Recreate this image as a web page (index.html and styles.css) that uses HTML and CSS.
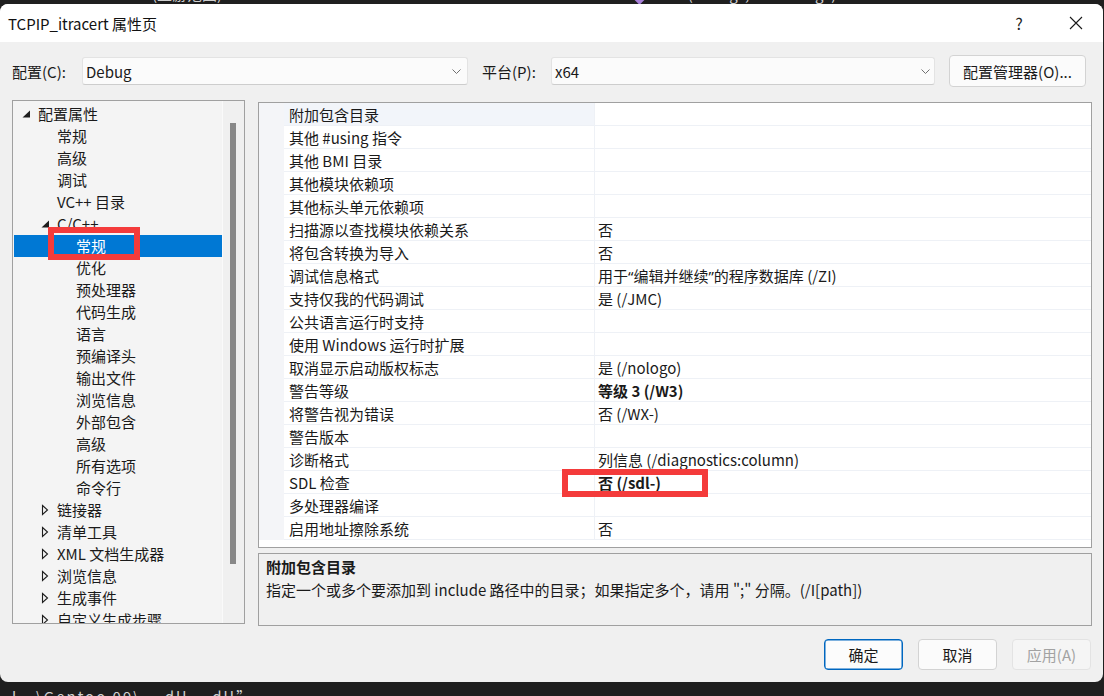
FILE: index.html
```html
<!DOCTYPE html>
<html lang="zh-CN">
<head>
<meta charset="utf-8">
<title>TCPIP_itracert 属性页</title>
<link rel="stylesheet" href="styles.css">
</head>
<body>
<div class="ide-top">
  <div class="ide-line">
    <span class="scope">(上游范围)</span>
    <span class="fn-icon"></span>
    <span class="fn">main(int argc, char** argv)</span>
  </div>
</div>
<div class="dialog">
  <div class="titlebar">
    <span class="title">TCPIP_itracert 属性页</span>
    <span class="help">?</span>
    <span class="close"><svg width="14" height="14" viewBox="0 0 14 14"><path d="M1 1L13 13M13 1L1 13" stroke="#1a1a1a" stroke-width="1.1" fill="none"/></svg></span>
  </div>
  <div class="content">
    <div class="config-row">
      <span class="lbl lbl-config">配置(C):</span>
      <div class="combo combo-config"><span class="combo-text">Debug</span><svg class="chev" width="9" height="5" viewBox="0 0 9 5"><path d="M0.5 0.5L4.5 4.5L8.5 0.5" stroke="#707070" stroke-width="1" fill="none"/></svg></div>
      <span class="lbl lbl-platform">平台(P):</span>
      <div class="combo combo-platform"><span class="combo-text">x64</span><svg class="chev" width="9" height="5" viewBox="0 0 9 5"><path d="M0.5 0.5L4.5 4.5L8.5 0.5" stroke="#707070" stroke-width="1" fill="none"/></svg></div>
      <button class="btn btn-manager">配置管理器(O)...</button>
    </div>
    <div class="main">
      <div class="tree">
        <div class="tree-list">
          <div class="node l0"><span class="tw"><svg width="19" height="22" viewBox="0 0 19 22"><path d="M11 7.5V14.5H3.5Z" fill="#1e1e1e"/></svg></span><span class="tx">配置属性</span></div>
          <div class="node l1"><span class="tw"></span><span class="tx">常规</span></div>
          <div class="node l1"><span class="tw"></span><span class="tx">高级</span></div>
          <div class="node l1"><span class="tw"></span><span class="tx">调试</span></div>
          <div class="node l1"><span class="tw"></span><span class="tx">VC++ 目录</span></div>
          <div class="node l1"><span class="tw"><svg width="19" height="22" viewBox="0 0 19 22"><path d="M11 7.5V14.5H3.5Z" fill="#1e1e1e"/></svg></span><span class="tx">C/C++</span></div>
          <div class="node l2 selected"><span class="tw"></span><span class="tx">常规</span></div>
          <div class="node l2"><span class="tw"></span><span class="tx">优化</span></div>
          <div class="node l2"><span class="tw"></span><span class="tx">预处理器</span></div>
          <div class="node l2"><span class="tw"></span><span class="tx">代码生成</span></div>
          <div class="node l2"><span class="tw"></span><span class="tx">语言</span></div>
          <div class="node l2"><span class="tw"></span><span class="tx">预编译头</span></div>
          <div class="node l2"><span class="tw"></span><span class="tx">输出文件</span></div>
          <div class="node l2"><span class="tw"></span><span class="tx">浏览信息</span></div>
          <div class="node l2"><span class="tw"></span><span class="tx">外部包含</span></div>
          <div class="node l2"><span class="tw"></span><span class="tx">高级</span></div>
          <div class="node l2"><span class="tw"></span><span class="tx">所有选项</span></div>
          <div class="node l2"><span class="tw"></span><span class="tx">命令行</span></div>
          <div class="node l1"><span class="tw"><svg width="19" height="22" viewBox="0 0 19 22"><path d="M4.5 6.5L9.5 11L4.5 15.5Z" fill="none" stroke="#1e1e1e" stroke-width="1.1"/></svg></span><span class="tx">链接器</span></div>
          <div class="node l1"><span class="tw"><svg width="19" height="22" viewBox="0 0 19 22"><path d="M4.5 6.5L9.5 11L4.5 15.5Z" fill="none" stroke="#1e1e1e" stroke-width="1.1"/></svg></span><span class="tx">清单工具</span></div>
          <div class="node l1"><span class="tw"><svg width="19" height="22" viewBox="0 0 19 22"><path d="M4.5 6.5L9.5 11L4.5 15.5Z" fill="none" stroke="#1e1e1e" stroke-width="1.1"/></svg></span><span class="tx">XML 文档生成器</span></div>
          <div class="node l1"><span class="tw"><svg width="19" height="22" viewBox="0 0 19 22"><path d="M4.5 6.5L9.5 11L4.5 15.5Z" fill="none" stroke="#1e1e1e" stroke-width="1.1"/></svg></span><span class="tx">浏览信息</span></div>
          <div class="node l1"><span class="tw"><svg width="19" height="22" viewBox="0 0 19 22"><path d="M4.5 6.5L9.5 11L4.5 15.5Z" fill="none" stroke="#1e1e1e" stroke-width="1.1"/></svg></span><span class="tx">生成事件</span></div>
          <div class="node l1"><span class="tw"><svg width="19" height="22" viewBox="0 0 19 22"><path d="M4.5 6.5L9.5 11L4.5 15.5Z" fill="none" stroke="#1e1e1e" stroke-width="1.1"/></svg></span><span class="tx">自定义生成步骤</span></div>
          <div class="mark mark-tree"></div>
        </div>
        <div class="tree-scroll"><div class="thumb"></div></div>
      </div>
      <div class="right">
        <div class="grid">
          <div class="gutter"></div>
          <div class="rows">
            <div class="row current"><div class="name">附加包含目录</div><div class="val"></div></div>
            <div class="row"><div class="name">其他 #using 指令</div><div class="val"></div></div>
            <div class="row"><div class="name">其他 BMI 目录</div><div class="val"></div></div>
            <div class="row"><div class="name">其他模块依赖项</div><div class="val"></div></div>
            <div class="row"><div class="name">其他标头单元依赖项</div><div class="val"></div></div>
            <div class="row"><div class="name">扫描源以查找模块依赖关系</div><div class="val">否</div></div>
            <div class="row"><div class="name">将包含转换为导入</div><div class="val">否</div></div>
            <div class="row"><div class="name">调试信息格式</div><div class="val">用于<span class="q">“</span>编辑并继续<span class="q">”</span>的程序数据库 (/ZI)</div></div>
            <div class="row"><div class="name">支持仅我的代码调试</div><div class="val">是 (/JMC)</div></div>
            <div class="row"><div class="name">公共语言运行时支持</div><div class="val"></div></div>
            <div class="row"><div class="name">使用 Windows 运行时扩展</div><div class="val"></div></div>
            <div class="row"><div class="name">取消显示启动版权标志</div><div class="val">是 (/nologo)</div></div>
            <div class="row"><div class="name">警告等级</div><div class="val bold">等级 3 (/W3)</div></div>
            <div class="row"><div class="name">将警告视为错误</div><div class="val">否 (/WX-)</div></div>
            <div class="row"><div class="name">警告版本</div><div class="val"></div></div>
            <div class="row"><div class="name">诊断格式</div><div class="val">列信息 (/diagnostics:column)</div></div>
            <div class="row"><div class="name">SDL 检查</div><div class="val bold">否 (/sdl-)</div></div>
            <div class="row"><div class="name">多处理器编译</div><div class="val"></div></div>
            <div class="row"><div class="name">启用地址擦除系统</div><div class="val">否</div></div>
          </div>
          <div class="mark mark-sdl"></div>
        </div>
        <div class="desc">
          <div class="desc-title">附加包含目录</div>
          <div class="desc-text">指定一个或多个要添加到 include 路径中的目录；如果指定多个，请用 ";" 分隔。(/I[path])</div>
        </div>
      </div>
    </div>
    <div class="actions">
      <button class="btn btn-ok">确定</button>
      <button class="btn btn-cancel">取消</button>
      <button class="btn btn-apply">应用(A)</button>
    </div>
  </div>
</div>
<div class="ide-bottom">l.. \Gentoo 09\ ...dll ...dll”</div>
</body>
</html>
```

FILE: styles.css
```css
* { box-sizing: border-box; }
html, body { margin: 0; padding: 0; }
body {
  width: 1104px;
  height: 696px;
  overflow: hidden;
  background: #1f1f1f;
  font-family: "Noto Sans CJK SC", "Noto Sans", sans-serif;
  font-size: 15px;
  color: #1a1a1a;
}

/* IDE strips behind the dialog */
.ide-top {
  height: 4px;
  overflow: hidden;
  background: #1f1f1f;
}
.ide-line {
  margin-top: -16px;
  height: 20px;
  line-height: 20px;
  display: flex;
  align-items: center;
  color: #cfcfcf;
  white-space: nowrap;
}
.scope { margin-left: 152px; }
.fn-icon {
  width: 9px;
  height: 9px;
  margin-left: 413px;
  margin-top: 8px;
  background: #a77fd8;
  transform: rotate(45deg);
}
.fn { margin-left: 8px; }
.ide-bottom {
  height: 14px;
  padding-left: 12px;
  line-height: 30px;
  color: #d0d0d0;
  white-space: nowrap;
  overflow: hidden;
  letter-spacing: 2px;
}

/* dialog */
.dialog {
  width: 1103px;
  height: 678px;
  background: #f0f0f0;
  border-radius: 8px;
  overflow: hidden;
  display: flex;
  flex-direction: column;
}
.titlebar {
  height: 38px;
  flex: none;
  background: #ffffff;
  display: flex;
  align-items: center;
  padding-left: 8px;
  padding-right: 15px;
}
.title { flex: 1; font-size: 15px; color: #111; }
.help {
  width: 20px;
  text-align: center;
  font-size: 16px;
  color: #222;
}
.close {
  width: 24px;
  height: 24px;
  margin-left: 35px;
  display: flex;
  align-items: center;
  justify-content: center;
}

.content {
  flex: 1;
  padding: 13px 11px 0 12px;
  display: flex;
  flex-direction: column;
}

/* configuration row */
.config-row {
  height: 32px;
  display: flex;
  align-items: center;
}
.lbl { white-space: nowrap; }
.lbl-config { width: 70px; }
.lbl-platform { width: 69px; margin-left: 14px; }
.combo {
  height: 28px;
  background: #fbfbfb;
  border: 1px solid #e3e3e3;
  border-bottom-color: #cdcdcd;
  border-radius: 3px;
  display: flex;
  align-items: center;
  padding-left: 3px;
}
.combo-text { flex: 1; }
.combo-config { width: 386px; padding-right: 6px; }
.combo-platform { width: 384px; padding-right: 4px; }
.btn {
  font-family: inherit;
  font-size: 15px;
  color: #1a1a1a;
  background: #fbfbfb;
  border: 1px solid #d3d3d3;
  border-radius: 4px;
  padding: 0;
}
.btn-manager {
  width: 137px;
  height: 32px;
  margin-left: 14px;
}

/* main area */
.main {
  margin-top: 13px;
  height: 526px;
  display: flex;
}
.tree {
  width: 233px;
  height: 524px;
  border: 1px solid #a0a0a0;
  background: #f4f4f4;
  display: flex;
}
.tree-list {
  position: relative;
  flex: 1;
  overflow: hidden;
  padding-top: 2px;
}
.node {
  height: 22px;
  line-height: 22px;
  display: flex;
  align-items: center;
  white-space: nowrap;
  color: #1a1a1a;
  margin-left: 1px;
}
.tw {
  width: 19px;
  height: 22px;
  flex: none;
  display: block;
}
.tw svg { display: block; }
.l0 { padding-left: 5px; }
.l1 { padding-left: 24px; }
.l2 { padding-left: 43px; }
.node.selected {
  background: #0078d4;
  color: #ffffff;
}
.tree-scroll {
  width: 22px;
  flex: none;
  background: #f0f0f0;
  border-left: 1px solid #fafafa;
  position: relative;
}
.thumb {
  position: absolute;
  left: 7px;
  top: 22px;
  width: 6px;
  height: 441px;
  background: #888888;
}

.mark {
  position: absolute;
  border: 6px solid #f43b3b;
  pointer-events: none;
}
.mark-tree {
  left: 35px;
  top: 126px;
  width: 92px;
  height: 33px;
}

.right {
  margin-left: 13px;
  width: 834px;
  display: flex;
  flex-direction: column;
}
.grid {
  position: relative;
  margin-top: 2px;
  height: 446px;
  border: 1px solid #a0a0a0;
  background: #ffffff;
  display: flex;
  align-items: flex-start;
}
.gutter {
  width: 25px;
  height: 437px;
  flex: none;
  background: #f4f5f8;
}
.rows { flex: 1; }
.row {
  height: 23px;
  display: flex;
  border-bottom: 1px solid #eef1f6;
  line-height: 22px;
  white-space: nowrap;
}
.name {
  width: 311px;
  flex: none;
  padding-left: 5px;
  padding-top: 1px;
  border-right: 1px solid #eef1f6;
}
.row.current .name { background: #f2f5fa; }
.val { flex: 1; padding-left: 3px; padding-top: 1px; }
.q { font-family: "Noto Sans", "DejaVu Sans", sans-serif; font-weight: 400; }
.bold { font-weight: 700; }
.mark-sdl {
  left: 303px;
  top: 366px;
  width: 146px;
  height: 28px;
}

.desc {
  margin-top: 5px;
  height: 73px;
  border: 1px solid #a0a0a0;
  background: #f0f0f0;
  padding: 2px 7px 0 7px;
  line-height: 22px;
  white-space: nowrap;
}
.desc-title { font-weight: 700; }
.desc-text { margin-top: 1px; }

/* bottom buttons */
.actions {
  margin-top: 13px;
  height: 31px;
  display: flex;
  justify-content: flex-end;
  gap: 15px;
  padding-right: 1px;
}
.actions .btn { width: 79px; height: 31px; }
.btn-ok {
  border-color: #0067c0;
  box-shadow: inset 0 0 0 0.5px #0067c0;
  background: #fcfcfc;
}
.btn-cancel { background: #fbfbfb; border-color: #d3d3d3; }
.btn-apply {
  color: #a2a2a2;
  background: #f5f5f5;
  border-color: #e3e3e3;
}
```
